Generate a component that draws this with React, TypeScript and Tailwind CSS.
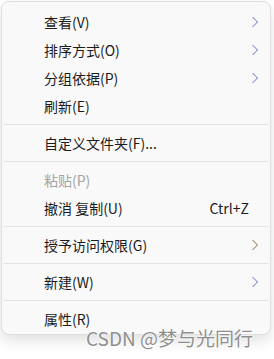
import React from "react";

const Chevron = ({ color = "#5873b8" }: { color?: string }) => (
  <svg width="8" height="12" viewBox="0 0 8 12" className="block">
    <path d="M1.5 1 L6.5 6 L1.5 11" fill="none" stroke={color} strokeWidth="1" />
  </svg>
);

type Item = { label: string; sub?: boolean; disabled?: boolean; shortcut?: string; chev?: string };

const Row = ({ label, sub, disabled, shortcut, chev }: Item) => (
  <div className="h-[28px] flex items-center pl-[42px] pr-[11px]">
    <span className={"flex-1 text-[14px] leading-none " + (disabled ? "text-[#a3a3a3]" : "text-[#1b1b1b]")}>{label}</span>
    {shortcut && <span className="text-[14px] leading-none text-[#1b1b1b] mr-[10px]">{shortcut}</span>}
    {sub && <Chevron color={chev} />}
  </div>
);

const Sep = () => (
  <div className="h-[9px] flex items-center pl-[2px] pr-[2px]">
    <div className="h-px w-full bg-[#e3e3e3]" />
  </div>
);

export default function App() {
  return (
    <div
      className="relative w-[274px] h-[359px] bg-white overflow-hidden"
      style={{ fontFamily: '"Segoe UI", "Noto Sans CJK SC", "Noto Sans", sans-serif' }}
    >
      <div className="ml-[1px] mt-[1px] w-[270px] rounded-[8px] border border-[#dedede] bg-[#f9f9f9] pt-[6px] pb-[1px] shadow-[0_6px_14px_rgba(0,0,0,0.12)]">
        <Row label="查看(V)" sub />
        <Row label="排序方式(O)" sub />
        <Row label="分组依据(P)" sub />
        <Row label="刷新(E)" />
        <Sep />
        <Row label="自定义文件夹(F)..." />
        <Sep />
        <Row label="粘贴(P)" disabled />
        <Row label="撤消 复制(U)" shortcut="Ctrl+Z" />
        <Sep />
        <Row label="授予访问权限(G)" sub chev="#8a6a3a" />
        <Sep />
        <Row label="新建(W)" sub />
        <Sep />
        <Row label="属性(R)" />
      </div>
      <div
        className="absolute left-[86px] top-[328px] text-[19px] leading-none text-[#8e8e8e]"
        style={{ textShadow: "0 0 2px #fff, 0 0 2px #fff" }}
      >
        CSDN @梦与光同行
      </div>
    </div>
  );
}
